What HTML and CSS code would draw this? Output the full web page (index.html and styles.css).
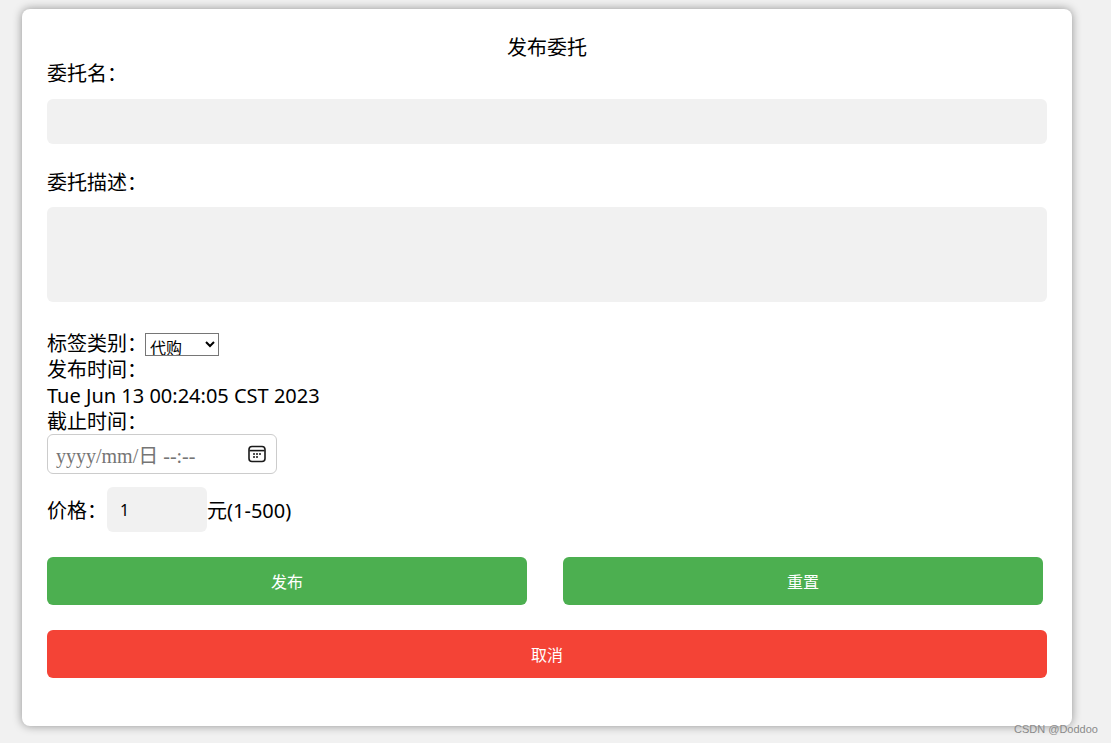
FILE: index.html
```html
<!DOCTYPE html>
<html lang="zh-CN">
<head>
<meta charset="utf-8">
<title>发布委托</title>
<link rel="stylesheet" href="styles.css">
</head>
<body>
<main class="card">
  <h1 class="title">发布委托</h1>
  <form class="form">
    <label class="line" for="name">委托名：</label>
    <input class="field field-name" id="name" type="text">
    <label class="line" for="desc">委托描述：</label>
    <textarea class="field field-desc" id="desc"></textarea>
    <div class="line tag-row">
      <label for="tag">标签类别：</label>
      <select class="tag-select" id="tag"><option>代购</option></select>
    </div>
    <div class="line time-a">发布时间：</div>
    <div class="line time-b">Tue Jun 13 00:24:05 CST 2023</div>
    <div class="line time-c">截止时间：</div>
    <div class="date-input">
      <span class="date-text">yyyy/mm/日 --:--</span>
      <svg class="cal" viewBox="0 0 18 18" width="18" height="18" aria-hidden="true">
        <rect x="1" y="1.5" width="16" height="15" rx="3" fill="none" stroke="#1a1a1a" stroke-width="1.6"/>
        <path d="M1.5 5.6h15" stroke="#1a1a1a" stroke-width="1.6"/>
        <path d="M5 9h2M8 9h2M11 9h2M5 12h2M8 12h2" stroke="#1a1a1a" stroke-width="1.7"/>
      </svg>
    </div>
    <div class="price-row">
      <label for="price">价格：</label>
      <input class="price-input" id="price" type="text" value="1">
      <span>元(1-500)</span>
    </div>
    <div class="btn-row">
      <button class="btn btn-green" type="button">发布</button>
      <button class="btn btn-green" type="button">重置</button>
    </div>
    <button class="btn btn-red" type="button">取消</button>
  </form>
</main>
<div class="watermark">CSDN @Doddoo</div>
</body>
</html>
```
FILE: styles.css
```css
* { box-sizing: border-box; }
html, body { height: 100%; }
body {
  margin: 0;
  background: #f1f1f1;
  font-family: "Noto Sans", "Noto Sans CJK SC", sans-serif;
  color: #000;
  overflow: hidden;
}
.card {
  width: 1050px;
  height: 717px;
  margin: 9px 0 0 22px;
  padding: 25px;
  background: #fff;
  border-radius: 8px;
  box-shadow: 0 0 10px rgba(0, 0, 0, 0.4);
}
.title {
  margin: 0;
  font-size: 20px;
  font-weight: 400;
  line-height: 27px;
  text-align: center;
}
.form { display: flex; flex-direction: column; align-items: flex-start; }
.line { font-size: 20px; line-height: 26px; height: 26px; }
.field {
  display: block;
  width: 1000px;
  border: 0;
  border-radius: 6px;
  background: #f1f1f1;
  resize: none;
  outline: 0;
}
.field-name { height: 45px; margin: 12px 0 26px; }
.field-desc { height: 95px; margin: 11px 0 29px; }
.tag-row { display: flex; align-items: center; }
.tag-select {
  width: 74px;
  height: 23px;
  margin-left: -2px;
  font-family: "Noto Sans CJK SC", sans-serif;
  font-size: 16px;
  background: #fff;
}
.date-input {
  display: flex;
  align-items: center;
  justify-content: space-between;
  width: 230px;
  height: 40px;
  margin-top: -1px;
  padding: 0 10px 0 8px;
  border: 1px solid #ccc;
  border-radius: 6px;
}
.date-text {
  font-family: "Liberation Serif", "Noto Sans CJK SC", serif;
  font-size: 20px;
  color: #757575;
  white-space: nowrap;
}
.price-row { display: flex; align-items: center; margin-top: 13px; font-size: 20px; height: 45px; }
.price-row label { width: 60px; }
.price-input {
  width: 100px;
  height: 45px;
  padding: 0 13px;
  border: 0;
  border-radius: 6px;
  background: #f1f1f1;
  font-family: "Noto Sans", sans-serif;
  font-size: 16px;
  outline: 0;
}
.btn-row { display: flex; gap: 36px; margin-top: 25px; }
.btn {
  width: 480px;
  height: 48px;
  border: 0;
  border-radius: 6px;
  color: #fff;
  font-family: "Noto Sans CJK SC", sans-serif;
  font-size: 16px;
}
.btn-green { background: #4caf50; }
.btn-red { width: 1000px; margin-top: 25px; background: #f44336; }
.watermark {
  position: absolute;
  left: 1014px;
  top: 722px;
  font-family: "Liberation Sans", sans-serif;
  font-size: 11px;
  line-height: 14px;
  color: #8a8a8a;
}
```
